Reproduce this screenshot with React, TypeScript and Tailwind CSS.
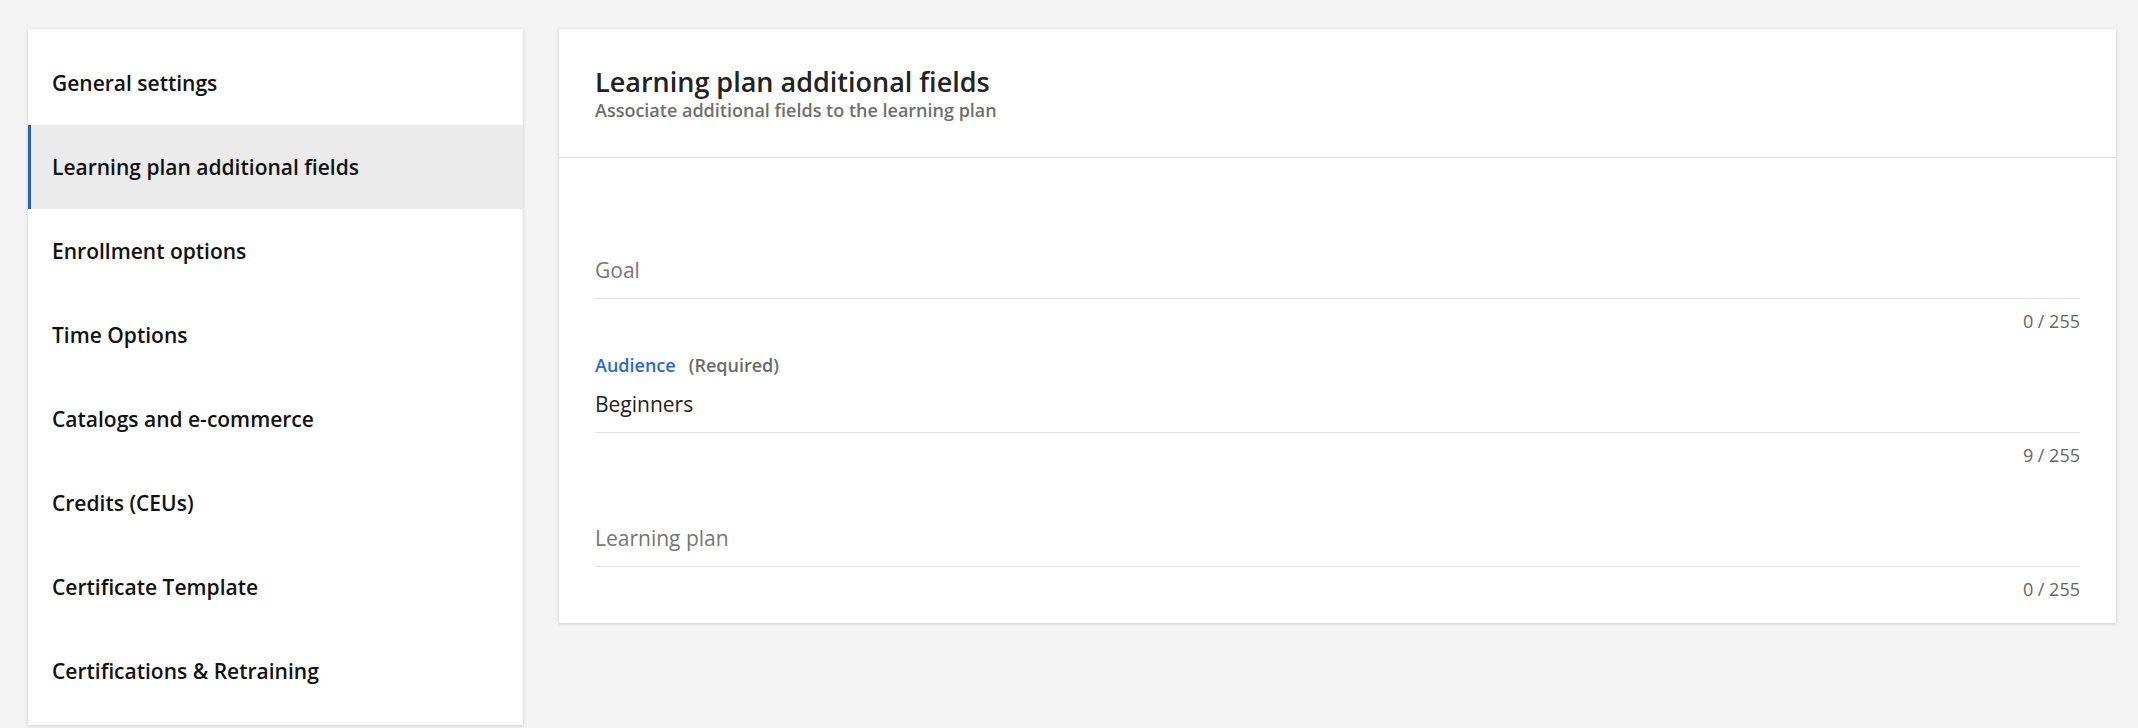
import React from "react";

const navItems = [
  "General settings",
  "Learning plan additional fields",
  "Enrollment options",
  "Time Options",
  "Catalogs and e-commerce",
  "Credits (CEUs)",
  "Certificate Template",
  "Certifications & Retraining",
];

type FieldProps = {
  label?: string;
  required?: boolean;
  value?: string;
  placeholder?: string;
  count: string;
};

function Field({ label, required, value, placeholder, count }: FieldProps) {
  return (
    <div className="flex flex-col">
      <div className="h-[24px] leading-[24px] text-[18px] font-semibold flex items-center gap-[13px]">
        {label && <span className="text-[#2c68d6]">{label}</span>}
        {required && <span className="text-[#6b6b6b]">(Required)</span>}
      </div>
      <div className="pt-[12px] pb-[12px] border-b border-[#e2e2e2] text-[21px] leading-[31px]">
        {value ? (
          <span className="text-[#222222]">{value}</span>
        ) : (
          <span className="text-[#767676]">{placeholder}</span>
        )}
      </div>
      <div className="mt-[9px] text-right text-[18px] leading-[27px] font-normal text-[#666666]">
        {count}
      </div>
    </div>
  );
}

export default function App() {
  return (
    <div
      className="min-h-[728px] bg-[#f4f4f4] flex items-start gap-[36px] pl-[28px] pr-[22px] pt-[29px] pb-[3px]"
      style={{ fontFamily: '"Open Sans", "Noto Sans", sans-serif' }}
    >
      <nav className="w-[495px] shrink-0 bg-white py-[12px] shadow-[0_1px_4px_rgba(0,0,0,0.16)]">
        {navItems.map((item, i) => (
          <div
            key={item}
            className={
              i === 1
                ? "h-[84px] flex items-center pl-[21px] pt-[2px] border-l-[3px] border-[#2b62ad] bg-[#ebebeb] text-[21px] font-semibold text-[#111111]"
                : "h-[84px] flex items-center pl-[21px] pt-[2px] border-l-[3px] border-transparent text-[21px] font-semibold text-[#111111]"
            }
          >
            {item}
          </div>
        ))}
      </nav>
      <main className="flex-1 bg-white shadow-[0_1px_4px_rgba(0,0,0,0.16)]">
        <header className="px-[36px] pt-[36px] pb-[35px] border-b border-[#e4e4e4]">
          <h1 className="text-[27px] leading-[33px] font-semibold text-[#222222]">
            Learning plan additional fields
          </h1>
          <p className="text-[18px] leading-[24px] font-semibold text-[#6f6f6f]">
            Associate additional fields to the learning plan
          </p>
        </header>
        <div className="px-[36px] pt-[61px] pb-[20px] flex flex-col gap-[18px]">
          <Field placeholder="Goal" count="0 / 255" />
          <Field label="Audience" required value="Beginners" count="9 / 255" />
          <Field placeholder="Learning plan" count="0 / 255" />
        </div>
      </main>
    </div>
  );
}
